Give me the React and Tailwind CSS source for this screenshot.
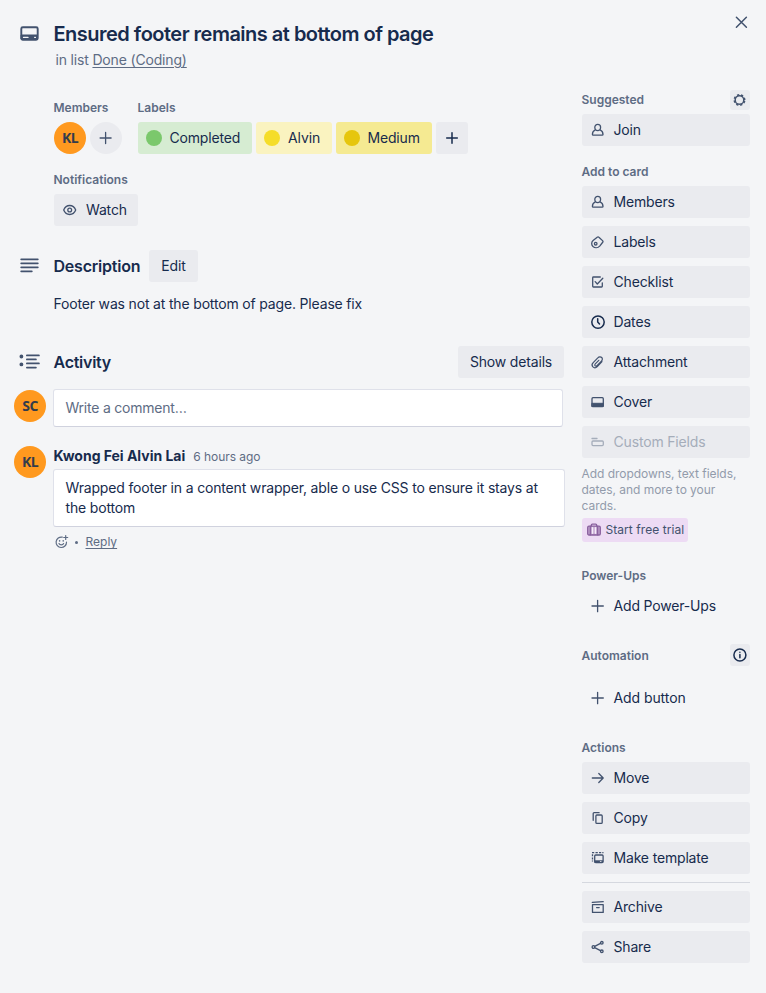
import React from "react";

function Icon({ size = 16, className = "text-[#42526e]", children }) {
  return (
    <svg
      width={size}
      height={size}
      viewBox={`0 0 ${size} ${size}`}
      fill="none"
      stroke="currentColor"
      strokeWidth="1.3"
      strokeLinecap="round"
      strokeLinejoin="round"
      className={`block shrink-0 ${className}`}
    >
      {children}
    </svg>
  );
}

const icons = {
  member: (
    <Icon>
      <path d="M5.500 7.600C4.900 6.900 4.800 6.200 4.800 5.300a2.900 2.900 0 0 1 5.800 0c0 .9-.1 1.600-.7 2.300-1.200 1.300-3.200 1.300-4.400 0z" />
      <path d="M5.300 7.900C3.500 8.800 2.400 10.400 2.400 12.400q0 .8.8.8h9q.8 0 .8-.8c0-2-1.100-3.600-2.900-4.500" />
    </Icon>
  ),
  label: (
    <Icon>
      <path d="M7.500 3.100q.7-.6 1.400.1l3.900 3.700q.5.500.1 1.100L9.700 12.100c-1.900 2-4.900 2-6.700.4-1.800-1.700-1.700-4.500.1-6z" />
      <circle cx="5.700" cy="9.700" r="1.300" />
    </Icon>
  ),
  check: (
    <Icon>
      <path d="M10.300 3H3.400q-.7 0-.7.7v8.600q0 .7.7.7h8.200q.7 0 .7-.7V8.800M5.200 7.600l2.100 2.400 5.500-5.700" />
    </Icon>
  ),
  clock: (
    <Icon className="text-[#172b4d]">
      <circle cx="8" cy="8.100" r="6.200" strokeWidth="1.500" />
      <path d="M7.700 4.700V8l1.800 2" strokeWidth="1.500" />
    </Icon>
  ),
  clip: (
    <Icon>
      <path
        strokeWidth="1.200"
        d="M12 7.700l-4.700 4.900c-1.400 1.400-3.300 1.400-4.400.3-1.100-1.200-1-3 .3-4.300l4.600-4.700c1.200-1.300 2.900-1.400 3.900-.4s.8 2.500-.3 3.600l-4.400 4.500c-.6.6-1.400.7-1.900.2s-.4-1.300.2-1.900l3.500-3.600"
      />
    </Icon>
  ),
  cover: (
    <Icon>
      <rect x="2" y="3.700" width="11.300" height="9" rx="1" />
      <path d="M2.200 9.300h11v3.200h-11z" fill="currentColor" strokeWidth="1" />
    </Icon>
  ),
  field: (
    <Icon className="text-[#a5adba]">
      <path d="M2 4.500h5" />
      <rect x="2" y="7" width="11.300" height="4.600" rx="1" />
    </Icon>
  ),
  plus: (
    <Icon>
      <path d="M7.600 2.300v11.400M2 8h11.300" />
    </Icon>
  ),
  move: (
    <Icon>
      <path d="M2.300 8h10.800M8.800 3.500L13.200 8l-4.400 4.500" />
    </Icon>
  ),
  copy: (
    <Icon>
      <path d="M3.200 10.300V3.600q0-.9.900-.9h5" />
      <rect x="5.900" y="5" width="6.300" height="8.400" rx="1" />
    </Icon>
  ),
  template: (
    <Icon>
      <rect x="4.700" y="5" width="8.400" height="7.600" rx="1" />
      <path d="M4.900 10.600h8v1.800h-8z" fill="currentColor" strokeWidth=".6" />
      <path strokeLinecap="butt" d="M2 2.700h2.200M5.500 2.700h2.300M9 2.700h2.200M12.300 2.700h1.200M2.500 4.300v2M2.500 7.400v2M2.500 10.500v1.100" />
      <path d="M10.300 11.500h.8" stroke="#ebecf0" strokeWidth=".8" />
    </Icon>
  ),
  archive: (
    <Icon>
      <path d="M2.300 3.400l10.900-.7M2.500 5.700h10.700v7.700H2.500zM6.600 8.600h2.600" />
    </Icon>
  ),
  share: (
    <Icon>
      <circle cx="3.400" cy="8" r="1.300" />
      <circle cx="11.800" cy="3.800" r="1.300" />
      <circle cx="11.800" cy="12.300" r="1.300" />
      <path d="M4.700 7.300l5.800-2.900M4.700 8.700l5.800 3" />
    </Icon>
  ),
};

function Heading({ children, className = "" }) {
  return (
    <h3 className={`-ml-[0.5px] text-[12px] leading-4 font-semibold tracking-normal text-[#5e6c84] ${className}`}>
      {children}
    </h3>
  );
}

function SideButton({ icon, children, plain, disabled }) {
  return (
    <button
      className={`flex h-8 w-full items-center gap-[7.5px] rounded-[3px] pl-2 text-left whitespace-nowrap ${
        plain ? "" : "bg-[#eaebef]"
      } ${disabled ? "text-[#a5adba]" : "text-[#172b4d]"}`}
    >
      {icons[icon]}
      <span>{children}</span>
    </button>
  );
}

function Avatar({ children }) {
  return (
    <div className="flex size-8 shrink-0 items-center justify-center rounded-full bg-[#ff991f] font-['Open_Sans',sans-serif] text-[14px] font-bold tracking-[-0.6px] text-[#333c4c]">
      {children}
    </div>
  );
}

function Label({ bg, dot, width, children }) {
  return (
    <div className={`flex h-8 items-center gap-[7.5px] rounded-[3px] pl-2 whitespace-nowrap ${bg} ${width}`}>
      <span className={`size-4 rounded-full ${dot}`} />
      {children}
    </div>
  );
}

function Main() {
  return (
    <main className="flex w-[566px] flex-col pt-[10px]">
      <div className="flex gap-4 pl-[54px]">
        <section className="w-[68px]">
          <Heading>Members</Heading>
          <div className="mt-1.5 flex gap-1">
            <Avatar>KL</Avatar>
            <button className="flex size-8 shrink-0 items-center justify-center rounded-full bg-[#eaebef]">
              <Icon>
                <path d="M7.600 2.500v11M2.100 8h11" />
              </Icon>
            </button>
          </div>
        </section>
        <section>
          <Heading>Labels</Heading>
          <div className="mt-1.5 flex gap-1">
            <Label bg="bg-[#d6ecd2]" dot="bg-[#7bc86c]" width="w-[114px]">Completed</Label>
            <Label bg="bg-[#faf3c0]" dot="bg-[#f5dd29]" width="w-[76px]">
              <span className="pl-[0.5px] tracking-[-0.08px]">Alvin</span>
            </Label>
            <Label bg="bg-[#f5ea92]" dot="bg-[#e6c60d]" width="w-[96px]">Medium</Label>
            <button className="flex size-8 items-center justify-center rounded-[3px] bg-[#eaebef]">
              <Icon className="text-[#172b4d]">
                <path d="M8 2.700v10.600M2.700 8h10.600" strokeWidth="1.500" />
              </Icon>
            </button>
          </div>
        </section>
      </div>

      <section className="mt-[18px] pl-[54px]">
        <Heading>Notifications</Heading>
        <button className="mt-1.5 flex h-8 w-[84px] items-center gap-2 rounded-[3px] bg-[#eaebef] pl-2">
          <Icon>
            <path d="M1.700 8c1.200-3 3.500-4.500 6-4.500s4.800 1.500 6 4.500c-1.200 3-3.500 4.500-6 4.500S2.900 11 1.700 8z" />
            <circle cx="7.700" cy="8" r="1.900" />
          </Icon>
          <span>Watch</span>
        </button>
      </section>

      <section className="mt-6">
        <div className="flex h-8 items-center pl-5">
          <Icon size={20}>
            <path strokeWidth="1.800" d="M1.200 3.300h16.600M1.200 7.300h16.600M1.200 11.300h16.600M1.200 15.300h10.600" />
          </Icon>
          <h2 className="ml-[13.5px] w-[95.5px] text-[16px] font-semibold tracking-[-0.22px] whitespace-nowrap">
            Description
          </h2>
          <button className="h-8 w-[49px] rounded-[3px] bg-[#eaebef]">Edit</button>
        </div>
        <p className="mt-3 pl-[53.5px] leading-5">Footer was not at the bottom of page. Please fix</p>
      </section>

      <section className="mt-8">
        <div className="flex h-8 items-center pl-[18px]">
          <Icon size={22}>
            <path strokeWidth="1.800" d="M8.900 4.400h12M8.900 8.400h9M8.900 12.400h12M8.900 16.600h9" />
            <path d="M3.400 5.400v.1M3.400 13.300v.1" strokeWidth="3.800" />
          </Icon>
          <h2 className="ml-[13.5px] text-[16px] font-semibold tracking-[-0.26px]">Activity</h2>
          <button className="mr-0.5 ml-auto h-8 w-[106px] rounded-[3px] bg-[#eaebef]">Show details</button>
        </div>
        <div className="mt-[11px] flex gap-[7px] pl-[14px]">
          <div className="pt-px">
            <Avatar>SC</Avatar>
          </div>
          <div className="h-[38px] w-[510px] rounded-[3px] border border-[#dfe1ea] border-b-[#d0d2de] bg-white px-[11.5px] leading-9 tracking-[-0.22px] text-[#5e6c84]">
            Write a comment…
          </div>
        </div>
        <div className="mt-[19px] flex gap-[7px] pl-[14px]">
          <Avatar>KL</Avatar>
          <div>
            <div className="flex h-5 items-center gap-2 pl-[0.5px] whitespace-nowrap">
              <span className="font-bold tracking-[-0.02px]">Kwong Fei Alvin Lai</span>
              <span className="pt-px text-[12px] tracking-[-0.04px] text-[#5e6c84]">6 hours ago</span>
            </div>
            <div className="mt-[3px] h-[58px] w-[512px] rounded-[3px] border border-[#dfe1ea] border-b-[#d0d2de] bg-white px-[11.5px] py-2 leading-5 whitespace-nowrap">
              Wrapped footer in a content wrapper, able o use CSS to ensure it stays at
              <br />
              the bottom
            </div>
            <div className="mt-[7px] flex h-4 items-center text-[12px] tracking-normal text-[#5e6c84]">
              <Icon className="text-[#5e6c84]">
                <path d="M9.300 3.200A5.200 5.200 0 1 0 13.500 8.200M12.700 1.500v4M10.700 3.500h4" strokeWidth="1.200" />
                <path d="M6 9.600c.8 1.700 3.800 1.700 4.600 0" strokeWidth="1.200" />
                <path d="M6.600 6.800v.1M10.200 6.800v.1" strokeWidth="1.500" />
              </Icon>
              <span className="mr-[7.5px] ml-[6px] size-[3px] rounded-full bg-[#5e6c84]" />
              <a className="underline underline-offset-2">Reply</a>
            </div>
          </div>
        </div>
      </section>
    </main>
  );
}

function Sidebar() {
  return (
    <aside className="ml-4 w-[168px]">
      <div className="flex h-5 items-center justify-between">
        <Heading>Suggested</Heading>
        <button className="flex size-5 items-center justify-center rounded-[3px] bg-[#eaebef]">
          <Icon>
            <circle cx="7.500" cy="8" r="4.300" strokeWidth="1.500" />
            <circle
              cx="7.500"
              cy="8"
              r="5.200"
              strokeWidth="1.600"
              strokeDasharray="2.200 1.884"
              strokeDashoffset="-.94"
              strokeLinecap="butt"
            />
          </Icon>
        </button>
      </div>
      <div className="mt-1">
        <SideButton icon="member">Join</SideButton>
      </div>

      <Heading className="mt-[18px]">Add to card</Heading>
      <div className="mt-1.5 flex flex-col gap-2">
        <SideButton icon="member">Members</SideButton>
        <SideButton icon="label">Labels</SideButton>
        <SideButton icon="check">Checklist</SideButton>
        <SideButton icon="clock">Dates</SideButton>
        <SideButton icon="clip">Attachment</SideButton>
        <SideButton icon="cover">Cover</SideButton>
        <SideButton icon="field" disabled>Custom Fields</SideButton>
      </div>
      <p className="mt-2 -ml-[0.5px] text-[12px] leading-4 tracking-[-0.04px] whitespace-nowrap text-[#929bab]">
        Add dropdowns, text fields,
        <br />
        dates, and more to your
        <br />
        cards.
      </p>
      <button className="mt-1 flex h-6 w-[106px] items-center gap-[3.5px] rounded-[3px] bg-[#eddbf4] pl-1 text-[12px] tracking-[0.06px] whitespace-nowrap text-[#42526e]">
        <Icon className="text-[#89609e]">
          <rect x="1.700" y="4.200" width="12.600" height="8.800" rx="1.300" fill="currentColor" fillOpacity=".45" />
          <path d="M5.300 4V3.200q0-1 1-1h3.400q1 0 1 1V4M4.300 4.500v8.300M11.700 4.500v8.300" />
          <path d="M6.600 5.700v5.600M9.400 5.700v5.600" stroke="#f6ecfa" strokeWidth="1.400" />
        </Icon>
        Start free trial
      </button>

      <Heading className="mt-[26px]">Power-Ups</Heading>
      <div className="mt-1.5">
        <SideButton icon="plus" plain>Add Power-Ups</SideButton>
      </div>

      <div className="mt-[22px] flex h-[22px] items-center justify-between">
        <Heading className="pt-0.5">Automation</Heading>
        <button className="flex h-[22px] w-5 items-center justify-center rounded-[3px] bg-[#eaebef]">
          <Icon className="text-[#172b4d]">
            <circle cx="7.900" cy="8" r="6" strokeWidth="1.500" />
            <path d="M7.900 7.600v3.200M7.900 5.200v.1" strokeWidth="1.500" />
          </Icon>
        </button>
      </div>
      <div className="mt-4">
        <SideButton icon="plus" plain>
          <span className="tracking-[-0.08px]">Add button</span>
        </SideButton>
      </div>

      <Heading className="mt-[26px]">Actions</Heading>
      <div className="mt-1.5 flex flex-col gap-2">
        <SideButton icon="move">Move</SideButton>
        <SideButton icon="copy">Copy</SideButton>
        <SideButton icon="template">Make template</SideButton>
        <hr className="border-[#d5d8df]" />
        <SideButton icon="archive">Archive</SideButton>
        <SideButton icon="share">Share</SideButton>
      </div>
    </aside>
  );
}

export default function App() {
  return (
    <div className="h-[993px] w-[766px] overflow-hidden bg-[#f4f5f7] font-['Inter','Liberation_Sans',sans-serif] text-[14px] leading-5 tracking-[-0.17px] text-[#172b4d]">
      <header className="flex h-[90px] justify-between pl-5">
        <div className="flex gap-[13.5px] pt-[22px]">
          <Icon size={20}>
            <rect x="1.300" y="5.300" width="16.400" height="12.400" rx="1.500" strokeWidth="1.900" />
            <path d="M1.500 13h16v4h-16z" fill="currentColor" strokeWidth="1" />
            <path d="M3.500 15.400h4.500M14.700 15.400h.7" stroke="#f4f5f7" strokeWidth="1.300" />
          </Icon>
          <div>
            <h1 className="text-[20px] leading-6 font-semibold tracking-[-0.51px]">
              Ensured footer remains at bottom of page
            </h1>
            <p className="mt-1 pl-0.5">
              <span className="text-[#5e6c84]">
                in list <a className="underline underline-offset-2">Done (Coding)</a>
              </span>
            </p>
          </div>
        </div>
        <button className="mt-[14px] mr-4 size-4">
          <Icon>
            <path d="M2.400 3.200l10 10M12.400 3.200l-10 10" strokeWidth="1.500" />
          </Icon>
        </button>
      </header>
      <div className="flex">
        <Main />
        <Sidebar />
      </div>
    </div>
  );
}
